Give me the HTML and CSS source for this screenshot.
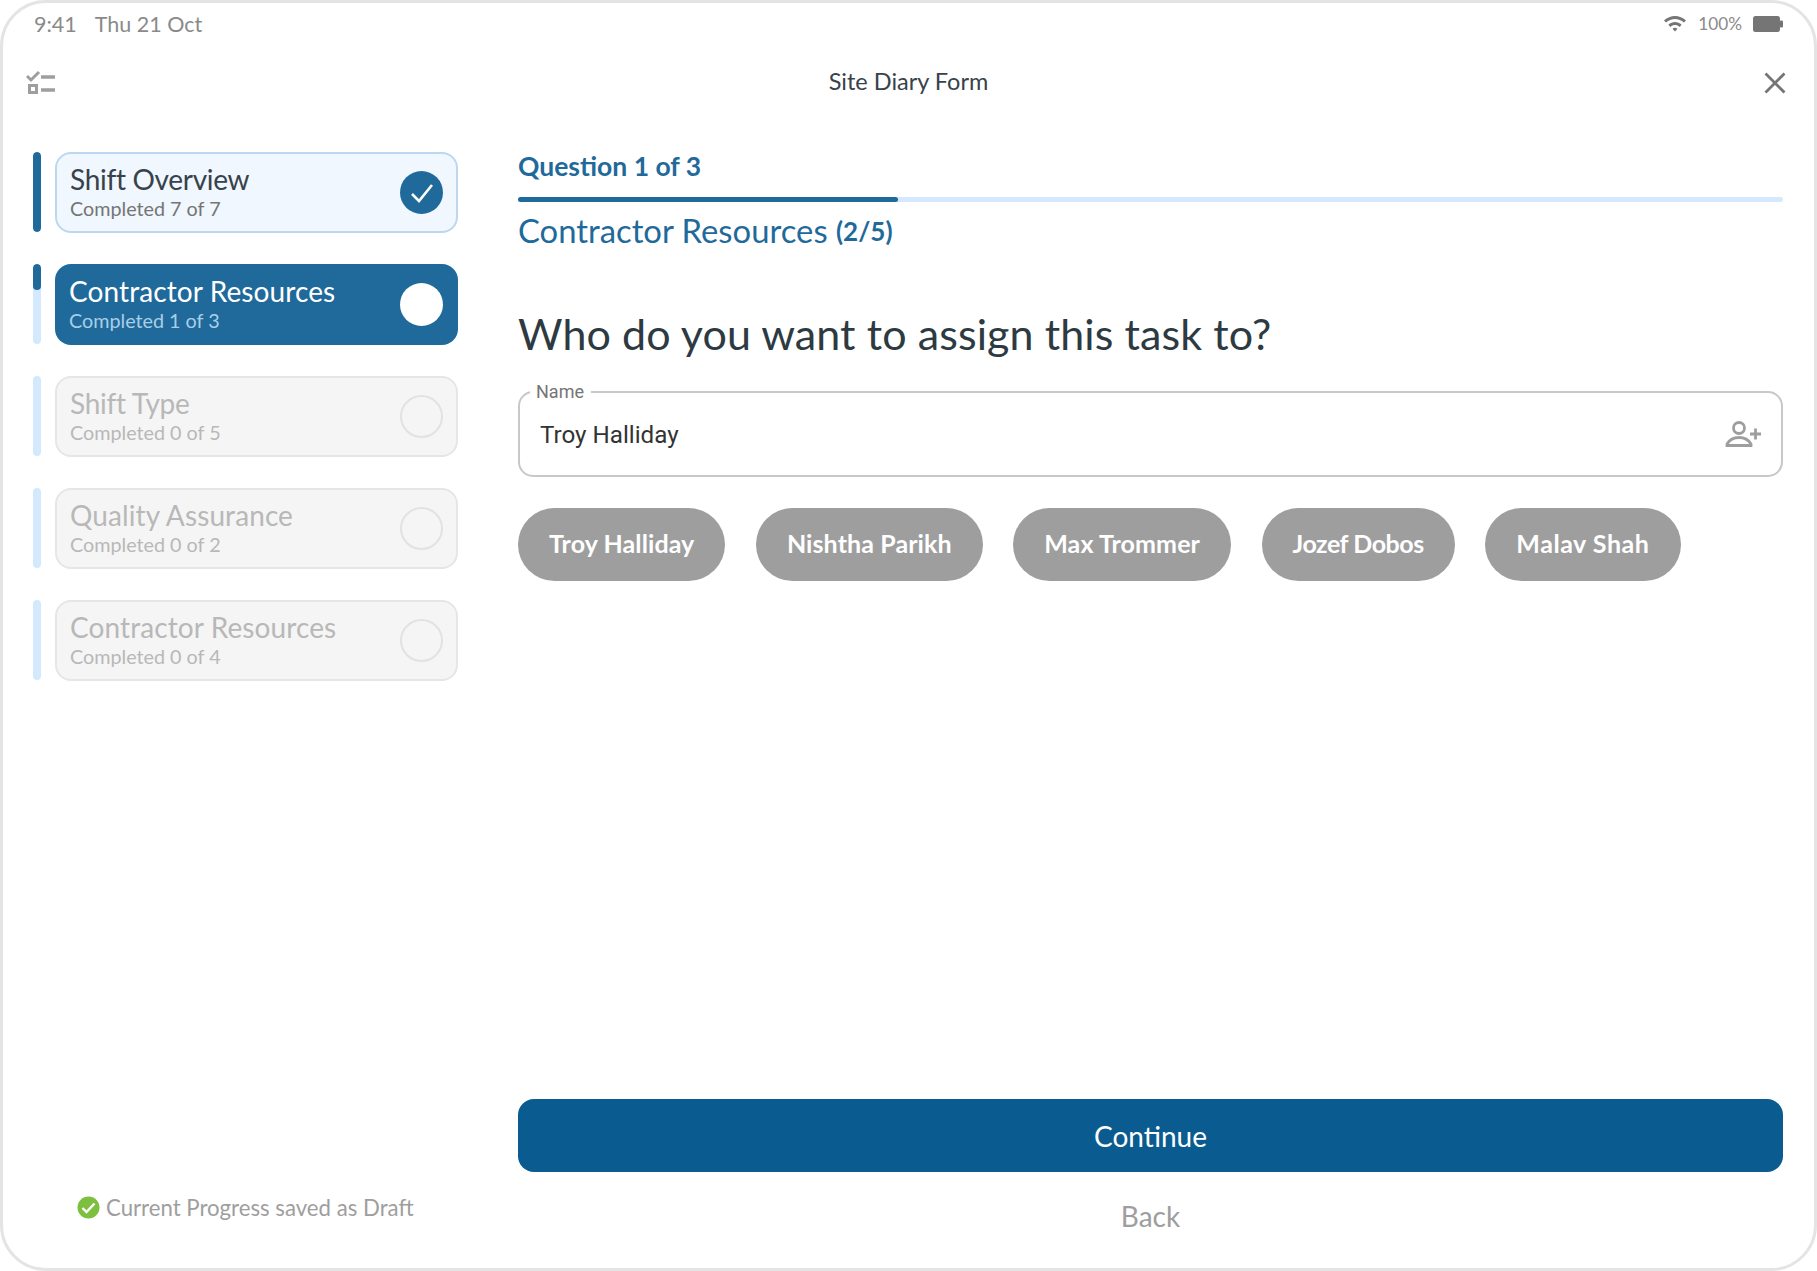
FILE: index.html
```html
<!DOCTYPE html>
<html lang="en">
<head>
<meta charset="utf-8">
<title>Site Diary Form</title>
<link rel="stylesheet" href="styles.css">
</head>
<body>
<div class="frame">
  <div class="status">
    <div class="status-left"><span>9:41</span><span>Thu 21 Oct</span></div>
    <div class="status-right">
      <svg class="wifi" width="24" height="18" viewBox="0 0 24 18"><path d="M1 5.400C7.200-.6 16.800-.6 23 5.400l-2 2.100C15.800 2.700 8.200 2.700 3 7.500z M5.400 9.800C9.200 6.200 14.800 6.200 18.600 9.800l-2 2.100C13.800 9.300 10.200 9.300 7.400 11.900z M9.500 13.800c1.500-1.300 3.500-1.300 5 0L12 16.500z" fill="#757575"/></svg>
      <span class="pct">100%</span>
      <svg width="30" height="16" viewBox="0 0 30 16"><rect x="0" y="0" width="27" height="16" rx="2.500" fill="#757575"/><rect x="27" y="4.500" width="3" height="7" rx="1" fill="#757575"/></svg>
    </div>
  </div>
  <header class="topbar">
    <svg class="list-icon" width="32" height="26" viewBox="0 0 32 26"><path d="M1 6l4 4 8-8" fill="none" stroke="#9e9e9e" stroke-width="3"/><path d="M15 7h14M15 20h14" stroke="#9e9e9e" stroke-width="3.400" fill="none"/><rect x="3.500" y="15.500" width="7" height="7" fill="none" stroke="#9e9e9e" stroke-width="3"/></svg>
    <h1 class="form-title">Site Diary Form</h1>
    <svg class="close-icon" width="22" height="22" viewBox="0 0 22 22"><path d="M1.500 1.500l19 19M20.500 1.500l-19 19" stroke="#757575" stroke-width="2.800" fill="none"/></svg>
  </header>
  <div class="body">
    <aside class="sidebar">
      <div class="steps">
        <div class="step">
          <div class="rail"><div class="rail-fill rail-full"></div></div>
          <div class="card card-done">
            <div class="card-text"><div class="card-title card-title-short">Shift Overview</div><div class="card-sub">Completed 7 of 7</div></div>
            <span class="dot dot-done"><svg width="24" height="20" viewBox="0 0 24 20"><path d="M2 11l7 7L22 2" fill="none" stroke="#fff" stroke-width="2.600"/></svg></span>
          </div>
        </div>
        <div class="step">
          <div class="rail"><div class="rail-fill rail-third"></div></div>
          <div class="card card-active">
            <div class="card-text"><div class="card-title">Contractor Resources</div><div class="card-sub">Completed 1 of 3</div></div>
            <span class="dot dot-active"></span>
          </div>
        </div>
        <div class="step">
          <div class="rail"></div>
          <div class="card card-off">
            <div class="card-text"><div class="card-title card-title-short">Shift Type</div><div class="card-sub">Completed 0 of 5</div></div>
            <span class="dot dot-off"></span>
          </div>
        </div>
        <div class="step">
          <div class="rail"></div>
          <div class="card card-off">
            <div class="card-text"><div class="card-title">Quality Assurance</div><div class="card-sub">Completed 0 of 2</div></div>
            <span class="dot dot-off"></span>
          </div>
        </div>
        <div class="step">
          <div class="rail"></div>
          <div class="card card-off">
            <div class="card-text"><div class="card-title">Contractor Resources</div><div class="card-sub">Completed 0 of 4</div></div>
            <span class="dot dot-off"></span>
          </div>
        </div>
      </div>
      <div class="draft">
        <svg width="23" height="23" viewBox="0 0 23 23"><circle cx="11.500" cy="11.500" r="11" fill="#7ebf3f"/><path d="M5.500 12l4 4 8-8.500" fill="none" stroke="#fff" stroke-width="2.400"/></svg>
        <span>Current Progress saved as Draft</span>
      </div>
    </aside>
    <main class="main">
      <div class="q-count">Question 1 of 3</div>
      <div class="progress"><div class="progress-fill"></div></div>
      <div class="section">Contractor Resources <span class="section-count">(2/5)</span></div>
      <h2 class="question">Who do you want to assign this task to?</h2>
      <fieldset class="field">
        <legend class="field-label">Name</legend>
        <div class="field-row">
          <span class="field-value">Troy Halliday</span>
          <svg width="36" height="30" viewBox="0 0 36 30"><circle cx="14" cy="8" r="5.500" fill="none" stroke="#9e9e9e" stroke-width="2.800"/><path d="M2 25.500V24c3-5 7-6.500 12-6.500s9 1.500 12 6.500v1.500z" fill="none" stroke="#9e9e9e" stroke-width="2.800"/><path d="M25 14h11M30.500 8.500v11" stroke="#9e9e9e" stroke-width="2.800" fill="none"/></svg>
        </div>
      </fieldset>
      <div class="chips">
        <span class="chip">Troy Halliday</span>
        <span class="chip">Nishtha Parikh</span>
        <span class="chip">Max Trommer</span>
        <span class="chip chip-tight">Jozef Dobos</span>
        <span class="chip chip-wide">Malav Shah</span>
      </div>
      <button class="continue" type="button">Continue</button>
      <div class="back">Back</div>
    </main>
  </div>
</div>
</body>
</html>
```
FILE: styles.css
```css
* { box-sizing: border-box; }
html, body { margin: 0; padding: 0; background: #fff; }
body { font-family: "Lato", "Liberation Sans", sans-serif; }
.frame {
  width: 1817px; height: 1271px;
  border: 3px solid #e4e4e4; border-radius: 46px;
  display: flex; flex-direction: column;
  overflow: hidden; background: #fff;
}
.status {
  height: 41px; padding: 0 31px; flex: none;
  display: flex; justify-content: space-between; align-items: center;
  color: #8a8a8a; font-size: 21.500px;
}
.status-left { display: flex; gap: 18px; }
.status-right { display: flex; align-items: center; gap: 11px; font-size: 17.200px; }
.wifi { display: block; }
.topbar {
  height: 78px; flex: none;
  display: grid; grid-template-columns: 1fr auto 1fr; align-items: center;
  padding: 0 28px 0 23px;
}
.close-icon { justify-self: end; }
.form-title {
  margin: 0 0 4px; padding-left: 5px; text-align: center;
  font-size: 23.500px; font-weight: 400; color: #37424a;
}
.body { flex: 1; display: flex; min-height: 0; }
.sidebar {
  width: 515px; flex: none; padding: 30px 0 0 30px;
  display: flex; flex-direction: column; justify-content: space-between;
}
.steps { display: flex; flex-direction: column; gap: 31px; }
.step { display: flex; gap: 14px; height: 81px; }
.rail { width: 8px; height: 80px; border-radius: 4px; background: #d4e9fd; overflow: hidden; }
.rail-fill { width: 100%; background: #1f6a9b; border-radius: 4px; }
.rail-full { height: 100%; }
.rail-third { height: 26px; }
.card {
  width: 403px; height: 81px; border-radius: 16px;
  display: flex; align-items: center; justify-content: space-between;
  padding: 0 13px;
}
.card-title { font-size: 28px; line-height: 31px; letter-spacing: .1px; }
.card-title-short { letter-spacing: -.3px; }
.card-sub { font-size: 19.750px; line-height: 27px; }
.card-done { background: #f0f7fe; border: 2px solid #bcd7ee; color: #37424a; }
.card-done .card-sub { color: #757575; }
.card-active { background: #1f6a9b; color: #fff; padding: 0 15px 0 14px; }
.card-active .card-sub { color: #a9cee6; }
.card-off { background: #f5f5f5; border: 2px solid #e6e6e6; color: #b8b8b8; }
.dot { width: 43px; height: 43px; border-radius: 50%; flex: none; display: flex; align-items: center; justify-content: center; }
.dot-done { background: #1f6a9b; }
.dot-active { background: #fff; }
.dot-off { border: 2px solid #e2e2e2; }
.draft {
  display: flex; align-items: center; gap: 6px;
  margin: 0 0 47px 44px;
  font-size: 22.200px; color: #9e9e9e;
}
.main { flex: 1; padding: 28px 31px 0 0; display: flex; flex-direction: column; min-width: 0; }
.q-count { font-size: 26.500px; font-weight: 700; color: #1f6a9b; line-height: 32px; }
.progress { height: 5px; border-radius: 3px; background: #d4e9fd; margin-top: 15px; }
.progress-fill { width: 380px; height: 100%; border-radius: 3px; background: #1f6a9b; }
.section { font-size: 32.800px; color: #1f6a9b; line-height: 40px; margin-top: 9px; }
.section-count { font-size: 26px; font-weight: 700; vertical-align: 2px; }
.question { margin: 58px 0 0; font-size: 43px; letter-spacing: .1px; font-weight: 400; color: #2d3a42; line-height: 50px; }
.field {
  margin: 24px 0 0; padding: 0 20px; min-width: 0;
  height: 94px; border: 2px solid #c8c8c8; border-radius: 15px;
}
.field-label { margin-left: -10px; padding: 0 7px 0 6px; font: 400 18px/18px "Roboto", sans-serif; color: #757575; }
.field-row { height: 68px; display: flex; align-items: center; justify-content: space-between; }
.field-value { font: 400 24.200px "Roboto", sans-serif; color: #333; }
.chips { display: flex; gap: 30.500px; margin-top: 31px; }
.chip {
  height: 73px; padding: 0 31px 3px; border-radius: 37px;
  background: #9e9e9e; color: #fff; font-size: 25px; font-weight: 700; letter-spacing: .1px;
  display: flex; align-items: center;
}
.chip-tight { letter-spacing: -.45px; }
.chip-wide { letter-spacing: .55px; }
.continue {
  margin-top: auto; height: 73px; border: 0; border-radius: 16px;
  background: #0a5b8f; color: #fff; font: 400 28px "Lato", sans-serif;
}
.back { height: 53px; margin: 8px 0 35px; text-align: center; font-size: 28px; color: #9e9e9e; line-height: 73px; }
```
